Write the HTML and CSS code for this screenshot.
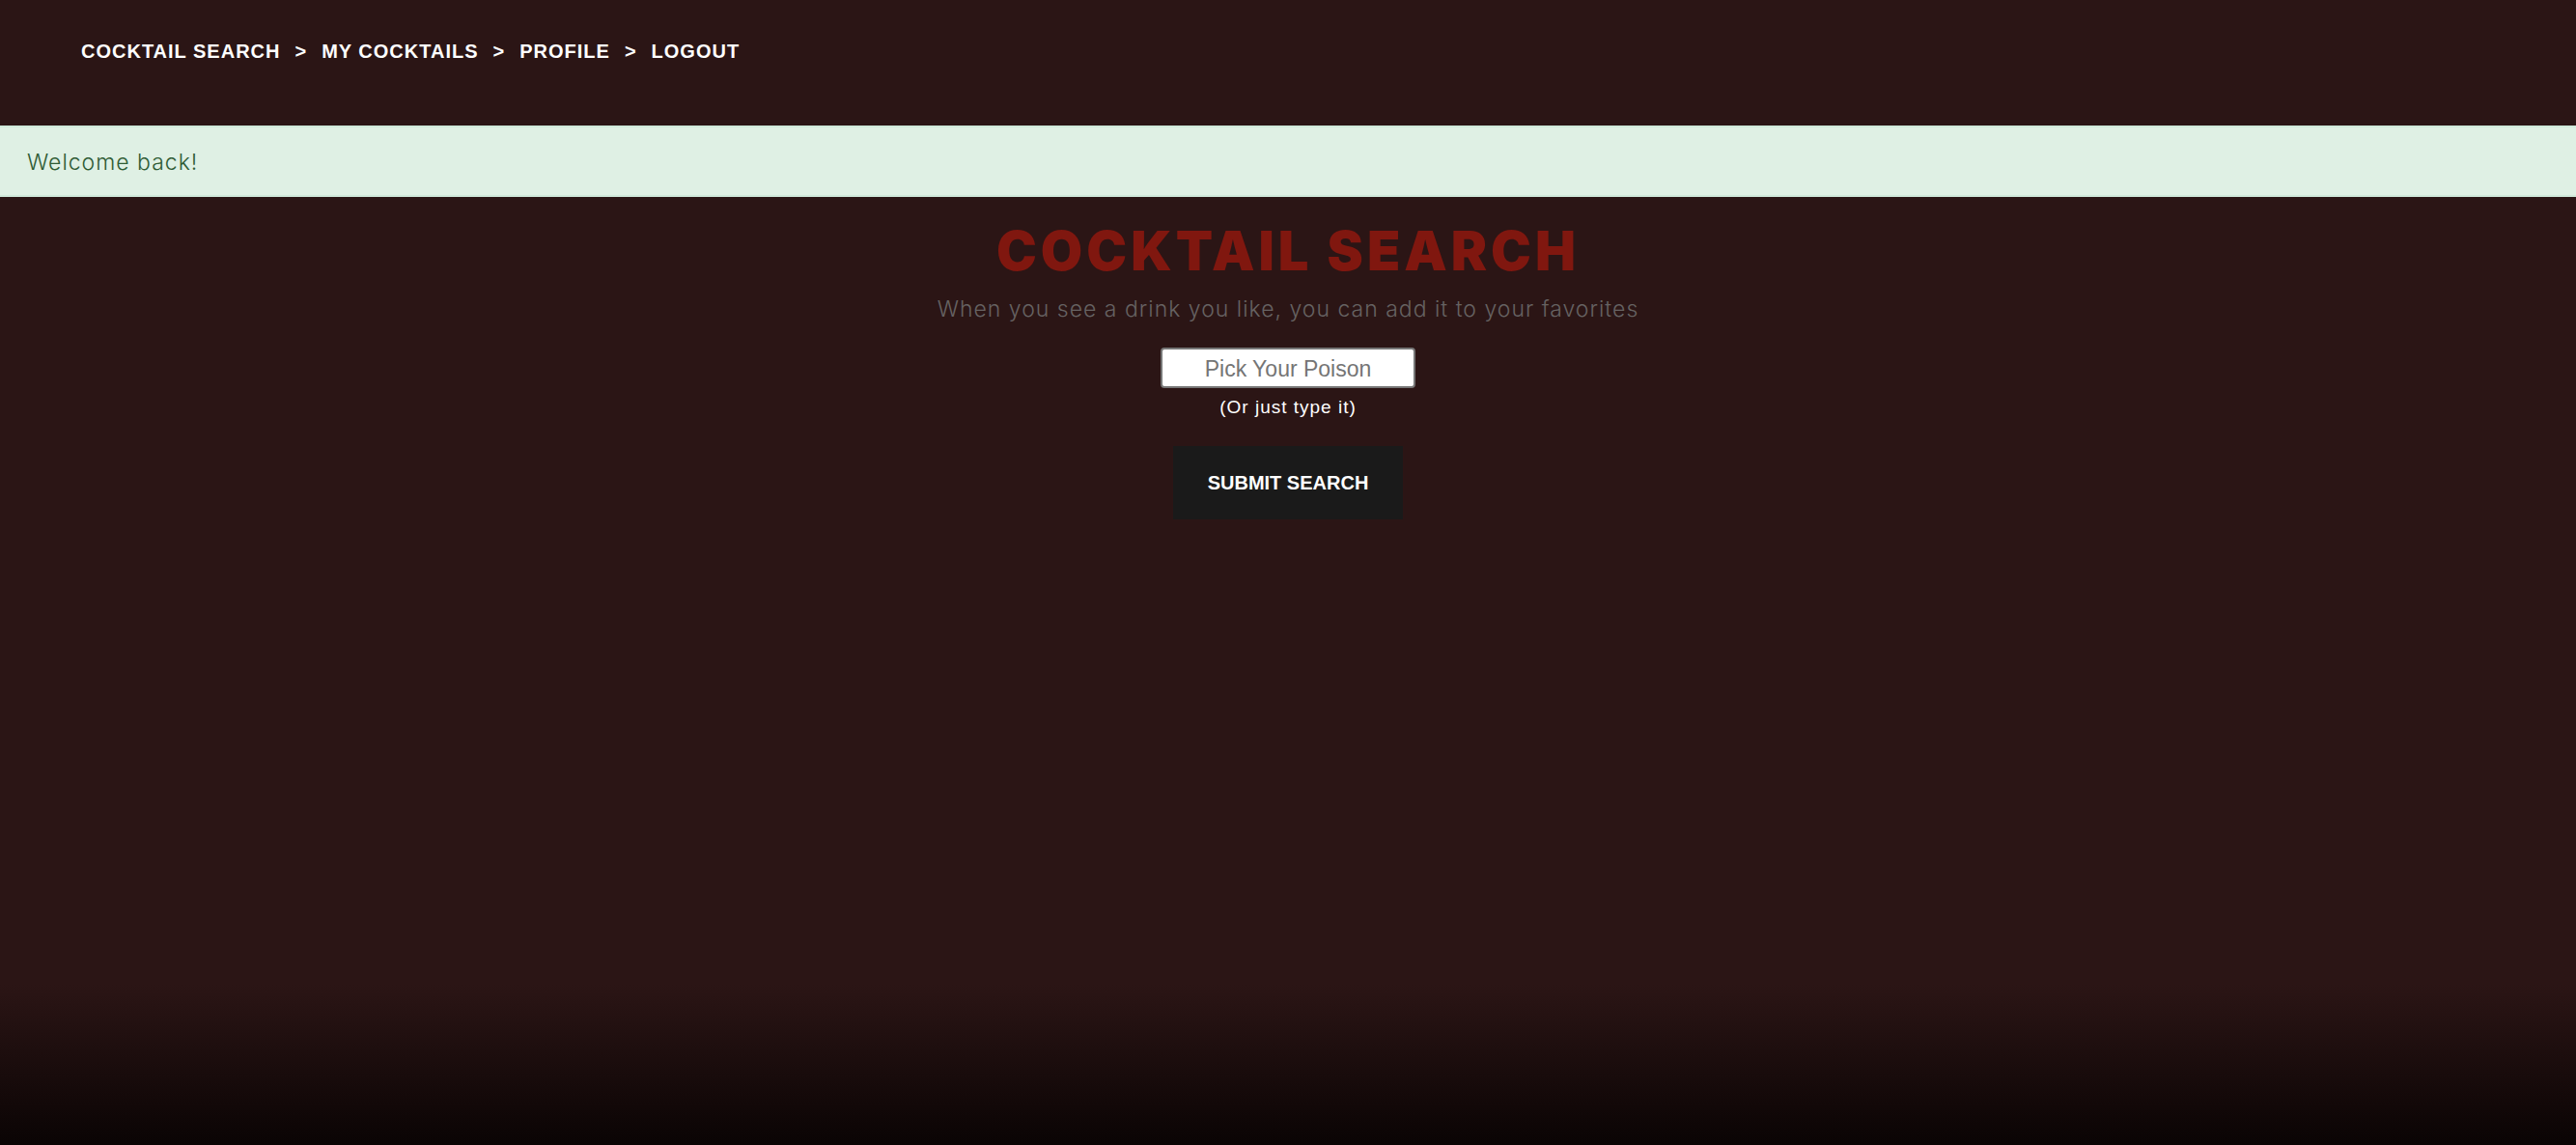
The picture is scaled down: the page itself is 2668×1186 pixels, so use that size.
FILE: index.html
```html
<!DOCTYPE html>
<html lang="en">
<head>
<meta charset="utf-8">
<title>Cocktail Search</title>
<link rel="stylesheet" href="styles.css">
</head>
<body>
<nav class="nav">
  <a href="#">COCKTAIL SEARCH</a>
  <span>&gt;</span>
  <a href="#">MY COCKTAILS</a>
  <span>&gt;</span>
  <a href="#">PROFILE</a>
  <span>&gt;</span>
  <a href="#">LOGOUT</a>
</nav>
<div class="alert" role="status">Welcome back!</div>
<main class="main">
  <h1 class="title">COCKTAIL SEARCH</h1>
  <p class="lead">When you see a drink you like, you can add it to your favorites</p>
  <form class="search">
    <input class="field" id="drink" type="text" placeholder="Pick Your Poison">
    <label class="hint" for="drink">(Or just type it)</label>
    <button class="submit" type="submit">SUBMIT SEARCH</button>
  </form>
</main>
<div class="fade"></div>
</body>
</html>
```
FILE: styles.css
```css
* {
  box-sizing: border-box;
}

body {
  margin: 0;
  min-height: 100vh;
  display: flex;
  flex-direction: column;
  background: #2b1515;
  color: #fff;
  font-family: "Liberation Sans", Arial, sans-serif;
}

.nav {
  display: flex;
  gap: 15px;
  padding: 41px 84px 65px;
  font-size: 20px;
  line-height: 24px;
  font-weight: 700;
  letter-spacing: 1px;
}

.nav a {
  color: #fff;
  text-decoration: none;
}

.alert {
  padding: 21px 28px 19px;
  border: 2px solid #d0e9da;
  border-width: 2px 0;
  background: #dff0e4;
  color: #2f5c35;
  font-family: Inter, sans-serif;
  font-size: 23px;
  line-height: 30px;
  font-weight: 300;
  letter-spacing: 1px;
}

.main {
  flex: 1;
  display: flex;
  flex-direction: column;
  align-items: center;
  padding-top: 24px;
  text-align: center;
}

.title {
  margin: 0;
  color: #80170f;
  font-family: Inter, sans-serif;
  font-size: 56px;
  line-height: 64px;
  font-weight: 900;
  letter-spacing: 4px;
}

.lead {
  margin: 12px 0 24px;
  color: #666262;
  font-family: Inter, sans-serif;
  font-size: 23px;
  line-height: 32px;
  font-weight: 300;
  letter-spacing: 1px;
}

.search {
  display: flex;
  flex-direction: column;
  align-items: center;
}

.field {
  width: 264px;
  height: 42px;
  padding: 2px 2px 0;
  border: 2px solid #767676;
  border-radius: 4px;
  background: #fff;
  font-family: inherit;
  font-size: 23px;
  text-align: center;
}

.field::placeholder {
  color: #757575;
  opacity: 1;
}

.hint {
  margin: 8px 0 28px;
  font-size: 19px;
  line-height: 24px;
  letter-spacing: 1px;
}

.submit {
  padding: 26px 36px;
  border: 0;
  background: #1a1a1a;
  color: #fff;
  font-family: inherit;
  font-size: 20px;
  line-height: 24px;
  font-weight: 700;
}

.fade {
  height: 166px;
  background: linear-gradient(#2b1515, #0a0404);
}
```
